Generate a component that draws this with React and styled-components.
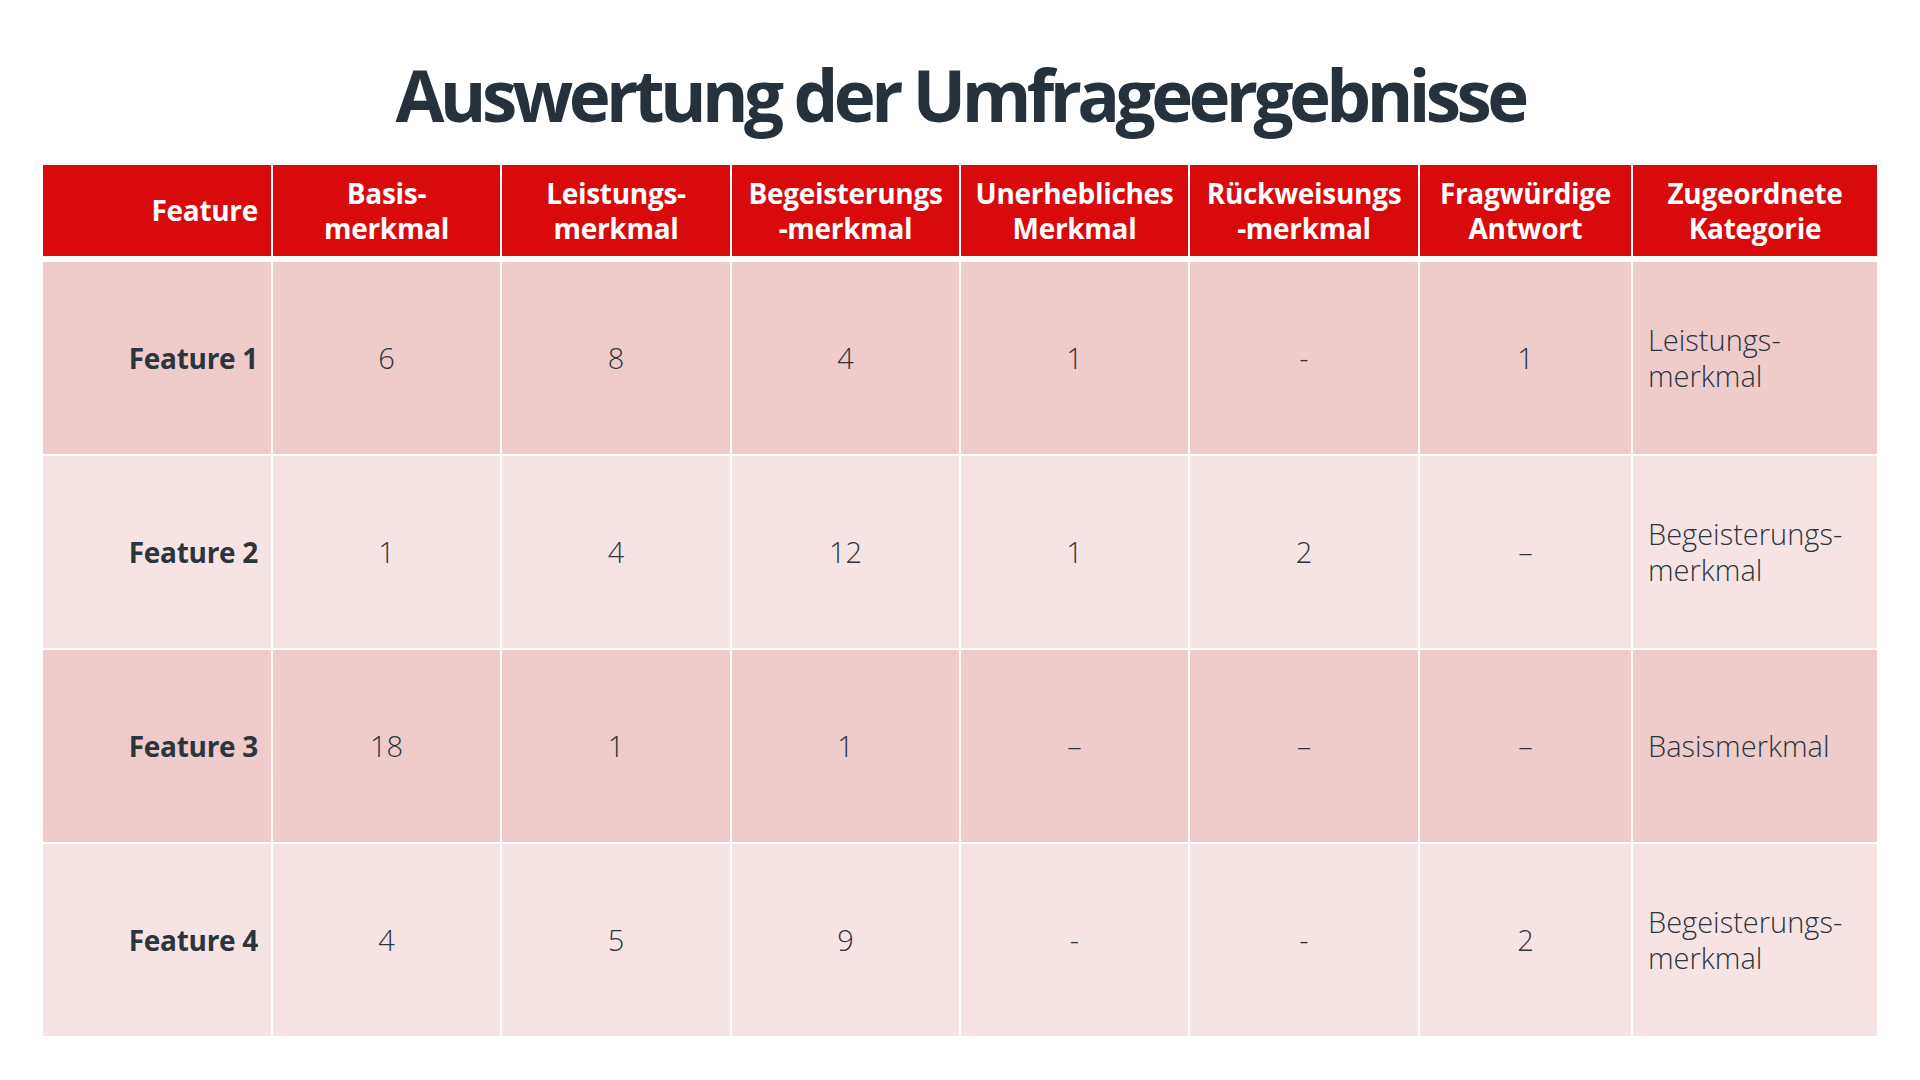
import React from "react";
import styled, { createGlobalStyle } from "styled-components";

const Global = createGlobalStyle`
  html, body { margin: 0; padding: 0; background: #ffffff; }
  body { font-family: "Open Sans", "Noto Sans", sans-serif; }
`;

const Slide = styled.div`
  width: 1920px;
  height: 1080px;
  box-sizing: border-box;
  padding: 52px 43px 0;
  background: #ffffff;
`;

const Title = styled.h1`
  margin: 0 0 27px;
  height: 86px;
  line-height: 86px;
  text-align: center;
  font-family: "Open Sans", "Noto Sans", sans-serif;
  font-weight: 700;
  font-size: 71px;
  letter-spacing: -4.6px;
  color: #26313b;
`;

const cols = "228px 227px 228px 227px 227px 228px 211px 244px";

const HeaderRow = styled.div`
  display: grid;
  grid-template-columns: ${cols};
  column-gap: 2px;
  height: 91px;
`;

const Body = styled.div`
  margin-top: 6px;
  display: grid;
  grid-template-columns: ${cols};
  grid-auto-rows: 192px;
  gap: 2px;
`;

const HeadCell = styled.div`
  background: #d90a0b;
  color: #ffffff;
  font-weight: 700;
  font-size: 28px;
  line-height: 35px;
  letter-spacing: -0.3px;
  display: flex;
  align-items: center;
  justify-content: ${(p) => (p.$align === "right" ? "flex-end" : "center")};
  text-align: ${(p) => p.$align || "center"};
  padding: 0 ${(p) => (p.$align === "right" ? "13px" : "0")} 0 0;
  white-space: pre-line;
`;

const Cell = styled.div`
  background: ${(p) => (p.$alt ? "#f6e4e5" : "#efcbcc")};
  color: #2c343c;
  font-size: ${(p) => (p.$bold ? "28px" : "29px")};
  line-height: 36px;
  font-weight: ${(p) => (p.$bold ? 700 : 300)};
  letter-spacing: ${(p) => (p.$bold ? "-0.3px" : "0")};
  display: flex;
  align-items: center;
  justify-content: ${(p) =>
    p.$align === "right" ? "flex-end" : p.$align === "left" ? "flex-start" : "center"};
  text-align: ${(p) => p.$align || "center"};
  padding: ${(p) =>
    p.$align === "right" ? "0 13px 0 0" : p.$align === "left" ? "0 0 0 15px" : "0"};
  white-space: pre-line;
`;

const headers = [
  "Basis-\nmerkmal",
  "Leistungs-\nmerkmal",
  "Begeisterungs\n-merkmal",
  "Unerhebliches\nMerkmal",
  "Rückweisungs\n-merkmal",
  "Fragwürdige\nAntwort",
  "Zugeordnete\nKategorie",
];

const rows = [
  { name: "Feature 1", vals: ["6", "8", "4", "1", "-", "1"], cat: "Leistungs-\nmerkmal" },
  { name: "Feature 2", vals: ["1", "4", "12", "1", "2", "–"], cat: "Begeisterungs-\nmerkmal" },
  { name: "Feature 3", vals: ["18", "1", "1", "–", "–", "–"], cat: "Basismerkmal" },
  { name: "Feature 4", vals: ["4", "5", "9", "-", "-", "2"], cat: "Begeisterungs-\nmerkmal" },
];

export default function App() {
  return (
    <>
      <Global />
      <Slide>
        <Title>Auswertung der Umfrageergebnisse</Title>
        <HeaderRow>
          <HeadCell $align="right">Feature</HeadCell>
          {headers.map((h) => (
            <HeadCell key={h}>{h}</HeadCell>
          ))}
        </HeaderRow>
        <Body>
          {rows.map((r, i) => (
            <React.Fragment key={r.name}>
              <Cell $alt={i % 2 === 1} $bold $align="right">
                {r.name}
              </Cell>
              {r.vals.map((v, j) => (
                <Cell key={j} $alt={i % 2 === 1}>
                  {v}
                </Cell>
              ))}
              <Cell $alt={i % 2 === 1} $align="left">
                {r.cat}
              </Cell>
            </React.Fragment>
          ))}
        </Body>
      </Slide>
    </>
  );
}
